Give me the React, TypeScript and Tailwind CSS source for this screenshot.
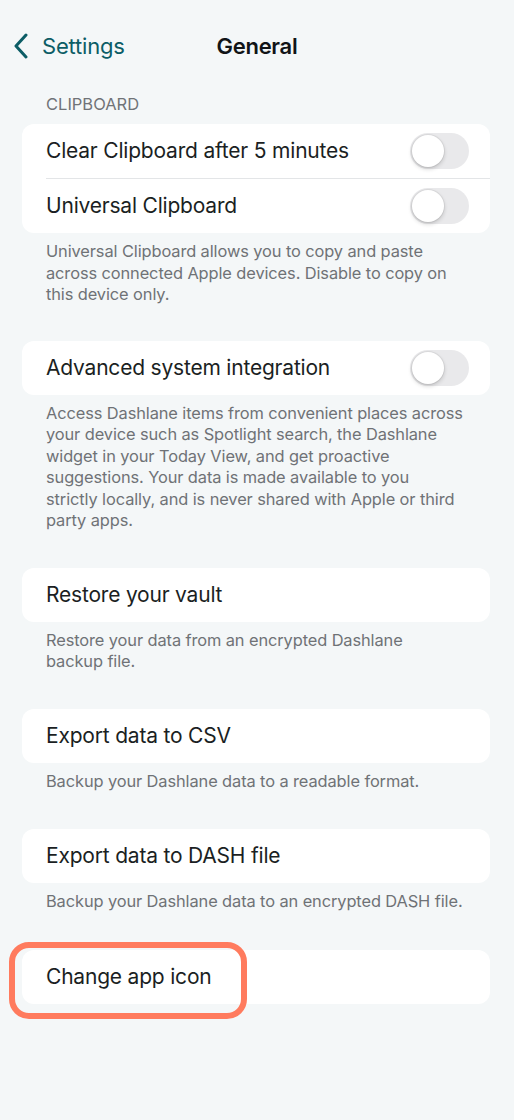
import React from 'react';

const font = { fontFamily: 'Inter, "Noto Sans", sans-serif' };

function Toggle() {
  return (
    <div className="flex h-[36px] w-[59px] items-center rounded-full bg-[#e9e9eb] p-[2px]">
      <div className="h-[32px] w-[32px] rounded-full bg-white shadow-[0_2px_4px_rgba(0,0,0,0.18),0_0_0_1px_rgba(0,0,0,0.05)]" />
    </div>
  );
}

function Row({ label, toggle }: { label: string; toggle?: boolean }) {
  return (
    <div className="flex h-[54px] items-center justify-between pl-[24px] pr-[21px]">
      <span className="text-[21px] tracking-[-0.2px] text-[#1b1f23]">{label}</span>
      {toggle && <Toggle />}
    </div>
  );
}

// lines are kept as in the app so the wrap matches
function Desc({ lines }: { lines: string[] }) {
  return (
    <p className="pl-[24px] pt-[8px] text-[16.4px] leading-[21.5px] tracking-[-0.1px] text-[#6f7276]">
      {lines.map((l) => (
        <span key={l} className="block whitespace-nowrap">
          {l}
        </span>
      ))}
    </p>
  );
}

export default function App() {
  return (
    <div className="min-h-[1120px] w-full bg-[#f4f7f8] pb-[40px] pt-[24px]" style={font}>
      <div className="grid h-[44px] grid-cols-[1fr_auto_1fr] items-center">
        <div className="flex items-center pl-[13px] text-[#0c5d66]">
          <svg width="16" height="26" viewBox="0 0 16 26" fill="none">
            <path d="M13 2 L3 13 L13 24" stroke="currentColor" strokeWidth="3" strokeLinecap="round" strokeLinejoin="round" />
          </svg>
          <span className="ml-[13px] text-[22px] tracking-[-0.2px]">Settings</span>
        </div>
        <span className="text-[22px] font-semibold tracking-[-0.3px] text-[#111417]">General</span>
        <div />
      </div>

      <div className="ml-[22px] mr-[24px]">
        <div className="mb-[9px] mt-[26px] pl-[24px] text-[16.5px] leading-[21px] text-[#707377]">CLIPBOARD</div>

        <div className="rounded-[12px] bg-white">
          <Row label="Clear Clipboard after 5 minutes" toggle />
          <div className="ml-[24px] h-px bg-[#e3e5e7]" />
          <Row label="Universal Clipboard" toggle />
        </div>
        <Desc
          lines={[
            'Universal Clipboard allows you to copy and paste',
            'across connected Apple devices. Disable to copy on',
            'this device only.',
          ]}
        />

        <div className="mt-[35px] rounded-[12px] bg-white">
          <Row label="Advanced system integration" toggle />
        </div>
        <Desc
          lines={[
            'Access Dashlane items from convenient places across',
            'your device such as Spotlight search, the Dashlane',
            'widget in your Today View, and get proactive',
            'suggestions. Your data is made available to you',
            'strictly locally, and is never shared with Apple or third',
            'party apps.',
          ]}
        />

        <div className="mt-[36px] rounded-[12px] bg-white">
          <Row label="Restore your vault" />
        </div>
        <Desc lines={['Restore your data from an encrypted Dashlane', 'backup file.']} />

        <div className="mt-[36px] rounded-[12px] bg-white">
          <Row label="Export data to CSV" />
        </div>
        <Desc lines={['Backup your Dashlane data to a readable format.']} />

        <div className="mt-[37px] rounded-[12px] bg-white">
          <Row label="Export data to DASH file" />
        </div>
        <Desc lines={['Backup your Dashlane data to an encrypted DASH file.']} />

        <div className="relative mt-[37px] rounded-[12px] bg-white">
          <Row label="Change app icon" />
          <div className="absolute left-[-13px] top-[-8px] h-[77px] w-[238px] rounded-[20px] border-[6px] border-[#ff7b5e]" />
        </div>
      </div>
    </div>
  );
}
